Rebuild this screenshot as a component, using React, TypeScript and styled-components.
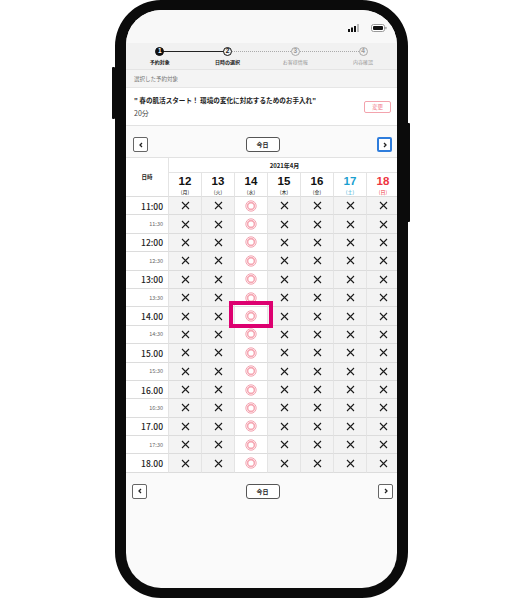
import styled, { createGlobalStyle } from 'styled-components'

const GlobalStyle = createGlobalStyle`
  html, body {
    margin: 0;
    padding: 0;
    background: #fff;
    font-family: "Noto Sans CJK JP", "Noto Sans", sans-serif;
  }
`

const days = [
  { d: '12', w: '(月)', c: '#111' },
  { d: '13', w: '(火)', c: '#111' },
  { d: '14', w: '(水)', c: '#111' },
  { d: '15', w: '(木)', c: '#111' },
  { d: '16', w: '(金)', c: '#111' },
  { d: '17', w: '(土)', c: '#1a9fd0' },
  { d: '18', w: '(日)', c: '#ee3440' },
]

const times = [
  '11:00', '11:30', '12:00', '12:30', '13:00', '13:30', '14.00', '14:30',
  '15.00', '15:30', '16.00', '16:30', '17.00', '17:30', '18.00',
]

const steps = ['予約対象', '日時の選択', 'お客様情報', '内容確認']

const Page = styled.div`
  width: 524px;
  height: 600px;
  position: relative;
`

const Phone = styled.div`
  position: relative;
  margin-left: 115px;
  width: 293px;
  height: 598px;
  box-sizing: border-box;
  border: 10px solid #0b0b0b;
  border-left-width: 11px;
  border-right-width: 11px;
  border-radius: 46px;
  background: #0b0b0b;
`

const SideButton = styled.div<{ $side: 'left' | 'right'; $top: number; $h: number }>`
  position: absolute;
  ${p => (p.$side === 'left' ? 'left: -14px;' : 'right: -13px;')}
  top: ${p => p.$top}px;
  width: 3px;
  height: ${p => p.$h}px;
  background: #0b0b0b;
  border-radius: 1px;
`

const Screen = styled.div`
  width: 100%;
  height: 100%;
  border-radius: 35px;
  overflow: hidden;
  background: #fafafa;
  display: flex;
  flex-direction: column;
`

const StatusBar = styled.div`
  height: 33px;
  flex: none;
  display: flex;
  align-items: center;
  justify-content: flex-end;
  gap: 10px;
  padding: 2px 10px 0 0;
  box-sizing: border-box;
  background: #f8f8f8;
`

const Stepper = styled.div`
  height: 27px;
  flex: none;
  background: #f1f1f1;
  border-bottom: 1px solid #e4e4e4;
  display: grid;
  grid-template-columns: repeat(4, 1fr);
  position: relative;
  padding: 2px 0 0;
  box-sizing: border-box;
`

const Step = styled.div`
  display: flex;
  flex-direction: column;
  align-items: center;
  position: relative;
  z-index: 1;
`

const StepDot = styled.div<{ $state: 'done' | 'current' | 'todo' }>`
  width: 9px;
  height: 9px;
  border-radius: 50%;
  box-sizing: border-box;
  display: flex;
  align-items: center;
  justify-content: center;
  font-size: 6.5px;
  line-height: 1;
  font-weight: 700;
  font-family: "Liberation Sans", sans-serif;
  background: ${p => (p.$state === 'done' ? '#111' : '#f1f1f1')};
  color: ${p => (p.$state === 'done' ? '#fff' : p.$state === 'current' ? '#111' : '#999')};
  border: 1px solid ${p => (p.$state === 'todo' ? '#aaa' : '#111')};
  margin-top: 2px;
`

const StepLabel = styled.div<{ $strong: boolean }>`
  margin-top: 3px;
  font-size: 5px;
  line-height: 6px;
  font-weight: ${p => (p.$strong ? 700 : 400)};
  color: ${p => (p.$strong ? '#222' : '#999')};
  white-space: nowrap;
`

const StepLine = styled.div<{ $left: number; $width: number; $dashed: boolean }>`
  position: absolute;
  top: 8px;
  left: ${p => p.$left}px;
  width: ${p => p.$width}px;
  height: 0;
  border-top: 1px ${p => (p.$dashed ? 'dotted #aaa' : 'solid #222')};
`

const SectionLabel = styled.div`
  height: 17px;
  flex: none;
  display: flex;
  align-items: center;
  padding-left: 8px;
  font-size: 5.5px;
  color: #777;
  background: #f4f4f4;
  border-bottom: 1px solid #e6e6e6;
`

const Card = styled.div`
  height: 37px;
  flex: none;
  background: #fff;
  border-bottom: 1px solid #e2e2e2;
  display: flex;
  align-items: center;
  padding: 0 6px 0 8px;
`

const CardText = styled.div`
  flex: 1;
  display: flex;
  flex-direction: column;
  gap: 3px;
`

const CardTitle = styled.div`
  font-size: 6.6px;
  font-weight: 700;
  color: #222;
  white-space: nowrap;
`

const CardSub = styled.div`
  font-size: 7px;
  color: #444;
`

const ChangeButton = styled.div`
  width: 27px;
  height: 12px;
  box-sizing: border-box;
  border: 1px solid #f3a3ad;
  border-radius: 2px;
  color: #f07a88;
  font-size: 5.5px;
  display: flex;
  align-items: center;
  justify-content: center;
  background: #fff;
`

const NavRow = styled.div<{ $pad: string }>`
  flex: none;
  display: flex;
  align-items: center;
  justify-content: space-between;
  padding: ${p => p.$pad};
`

const ArrowButton = styled.div<{ $active?: boolean }>`
  width: 15px;
  height: 15px;
  box-sizing: border-box;
  border: ${p => (p.$active ? '2px solid #2f7ddc' : '1px solid #666')};
  border-radius: 2px;
  background: #fff;
  display: flex;
  align-items: center;
  justify-content: center;
`

const TodayButton = styled.div`
  width: 34px;
  height: 15px;
  box-sizing: border-box;
  border: 1px solid #555;
  border-radius: 3px;
  background: #fff;
  font-size: 6px;
  font-weight: 700;
  color: #222;
  display: flex;
  align-items: center;
  justify-content: center;
`

const Table = styled.div`
  flex: none;
  display: grid;
  grid-template-columns: 43px repeat(7, 33px);
  grid-template-rows: 15px 24px repeat(15, 18.4px);
  background: #fff;
  border-top: 1px solid #e2e2e2;
  width: 274px;
`

const Corner = styled.div`
  grid-row: 1 / span 2;
  grid-column: 1;
  display: flex;
  align-items: center;
  justify-content: center;
  font-size: 5.5px;
  font-weight: 700;
  color: #222;
  border-right: 1px solid #e4e4e4;
  border-bottom: 1px solid #dcdcdc;
`

const Month = styled.div`
  grid-row: 1;
  grid-column: 2 / span 7;
  display: flex;
  align-items: center;
  justify-content: center;
  font-size: 6px;
  font-weight: 700;
  color: #222;
  border-bottom: 1px solid #e4e4e4;
`

const DayHead = styled.div<{ $color: string }>`
  display: flex;
  flex-direction: column;
  align-items: center;
  justify-content: center;
  color: ${p => p.$color};
  border-right: 1px solid #e4e4e4;
  border-bottom: 1px solid #dcdcdc;
  box-sizing: border-box;
`

const DayNum = styled.div`
  font-family: "Liberation Sans", sans-serif;
  font-size: 11.5px;
  font-weight: 700;
  line-height: 12px;
`

const DayWeek = styled.div`
  font-size: 5px;
  line-height: 6px;
  margin-top: 2px;
`

const TimeCell = styled.div<{ $hour: boolean }>`
  display: flex;
  align-items: center;
  justify-content: flex-end;
  padding-right: 5px;
  font-size: ${p => (p.$hour ? '8.5px' : '5.5px')};
  font-weight: ${p => (p.$hour ? 500 : 400)};
  color: ${p => (p.$hour ? '#222' : '#666')};
  border-bottom: 1px solid #dcdcdc;
  border-right: 1px solid #e4e4e4;
  background: #fff;
`

const SlotCell = styled.div<{ $open: boolean }>`
  position: relative;
  display: flex;
  align-items: center;
  justify-content: center;
  background: ${p => (p.$open ? '#fff' : '#f3f3f3')};
  border-bottom: 1px solid #dcdcdc;
  border-right: 1px solid #e4e4e4;
`

const Highlight = styled.div`
  position: absolute;
  left: -6px;
  right: -6px;
  top: -6px;
  bottom: -3px;
  border: 4px solid #dd0070;
  z-index: 2;
  pointer-events: none;
`

const Chevron = ({ dir }: { dir: 'left' | 'right' }) => (
  <svg width="6" height="6" viewBox="0 0 6 6">
    <path
      d={dir === 'left' ? 'M4 1 L2 3 L4 5' : 'M2 1 L4 3 L2 5'}
      fill="none"
      stroke="#222"
      strokeWidth="1.3"
    />
  </svg>
)

const Cross = () => (
  <svg width="9" height="9" viewBox="0 0 9 9">
    <path d="M1 1 L8 8 M8 1 L1 8" stroke="#1c1c1c" strokeWidth="1.1" />
  </svg>
)

const Ring = () => (
  <svg width="12" height="12" viewBox="0 0 12 12">
    <circle cx="6" cy="6" r="5.2" fill="#fff" stroke="#f29aa8" strokeWidth="0.9" />
    <circle cx="6" cy="6" r="3.4" fill="none" stroke="#f6a7b3" strokeWidth="1.6" />
  </svg>
)

const Signal = () => (
  <svg width="13" height="8" viewBox="0 0 13 8">
    <rect x="0" y="5" width="2" height="3" fill="#111" />
    <rect x="3" y="3.5" width="2" height="4.5" fill="#111" />
    <rect x="6" y="2" width="2" height="6" fill="#111" />
    <rect x="9" y="0" width="2" height="8" fill="#bbb" />
  </svg>
)

const Battery = () => (
  <svg width="16" height="8" viewBox="0 0 16 8">
    <rect x="0.5" y="0.5" width="13" height="7" rx="2" fill="#fff" stroke="#999" />
    <rect x="2" y="2" width="10" height="4" rx="1" fill="#111" />
    <rect x="14.3" y="2.7" width="1.2" height="2.6" rx="0.5" fill="#999" />
  </svg>
)

export default function App() {
  return (
    <Page>
      <GlobalStyle />
      <Phone>
        <SideButton $side="left" $top={57} $h={52} />
        <SideButton $side="right" $top={113} $h={99} />
        <Screen>
          <StatusBar>
            <Signal />
            <Battery />
          </StatusBar>

          <Stepper>
            <StepLine $left={34} $width={68} $dashed={false} />
            <StepLine $left={103} $width={136} $dashed />
            {steps.map((s, i) => (
              <Step key={s}>
                <StepDot $state={i === 0 ? 'done' : i === 1 ? 'current' : 'todo'}>{i + 1}</StepDot>
                <StepLabel $strong={i < 2}>{s}</StepLabel>
              </Step>
            ))}
          </Stepper>

          <SectionLabel>選択した予約対象</SectionLabel>
          <Card>
            <CardText>
              <CardTitle>" 春の肌活スタート！ 環境の変化に対応するためのお手入れ"</CardTitle>
              <CardSub>20分</CardSub>
            </CardText>
            <ChangeButton>変更</ChangeButton>
          </Card>

          <NavRow $pad="11px 5px 5px 7px">
            <ArrowButton>
              <Chevron dir="left" />
            </ArrowButton>
            <TodayButton>今日</TodayButton>
            <ArrowButton $active>
              <Chevron dir="right" />
            </ArrowButton>
          </NavRow>

          <Table>
            <Corner>日時</Corner>
            <Month>2021年4月</Month>
            {days.map(d => (
              <DayHead key={d.d} $color={d.c}>
                <DayNum>{d.d}</DayNum>
                <DayWeek>{d.w}</DayWeek>
              </DayHead>
            ))}
            {times.map(t => (
              <Row key={t} time={t} />
            ))}
          </Table>

          <NavRow $pad="11px 4px 0 6px">
            <ArrowButton>
              <Chevron dir="left" />
            </ArrowButton>
            <TodayButton>今日</TodayButton>
            <ArrowButton>
              <Chevron dir="right" />
            </ArrowButton>
          </NavRow>
        </Screen>
      </Phone>
    </Page>
  )
}

const Row = ({ time }: { time: string }) => {
  const hour = time.endsWith('00')
  return (
    <>
      <TimeCell $hour={hour}>{time}</TimeCell>
      {days.map((d, i) => (
        <SlotCell key={d.d} $open={i === 2}>
          {i === 2 ? <Ring /> : <Cross />}
          {i === 2 && time === '14.00' && <Highlight />}
        </SlotCell>
      ))}
    </>
  )
}
